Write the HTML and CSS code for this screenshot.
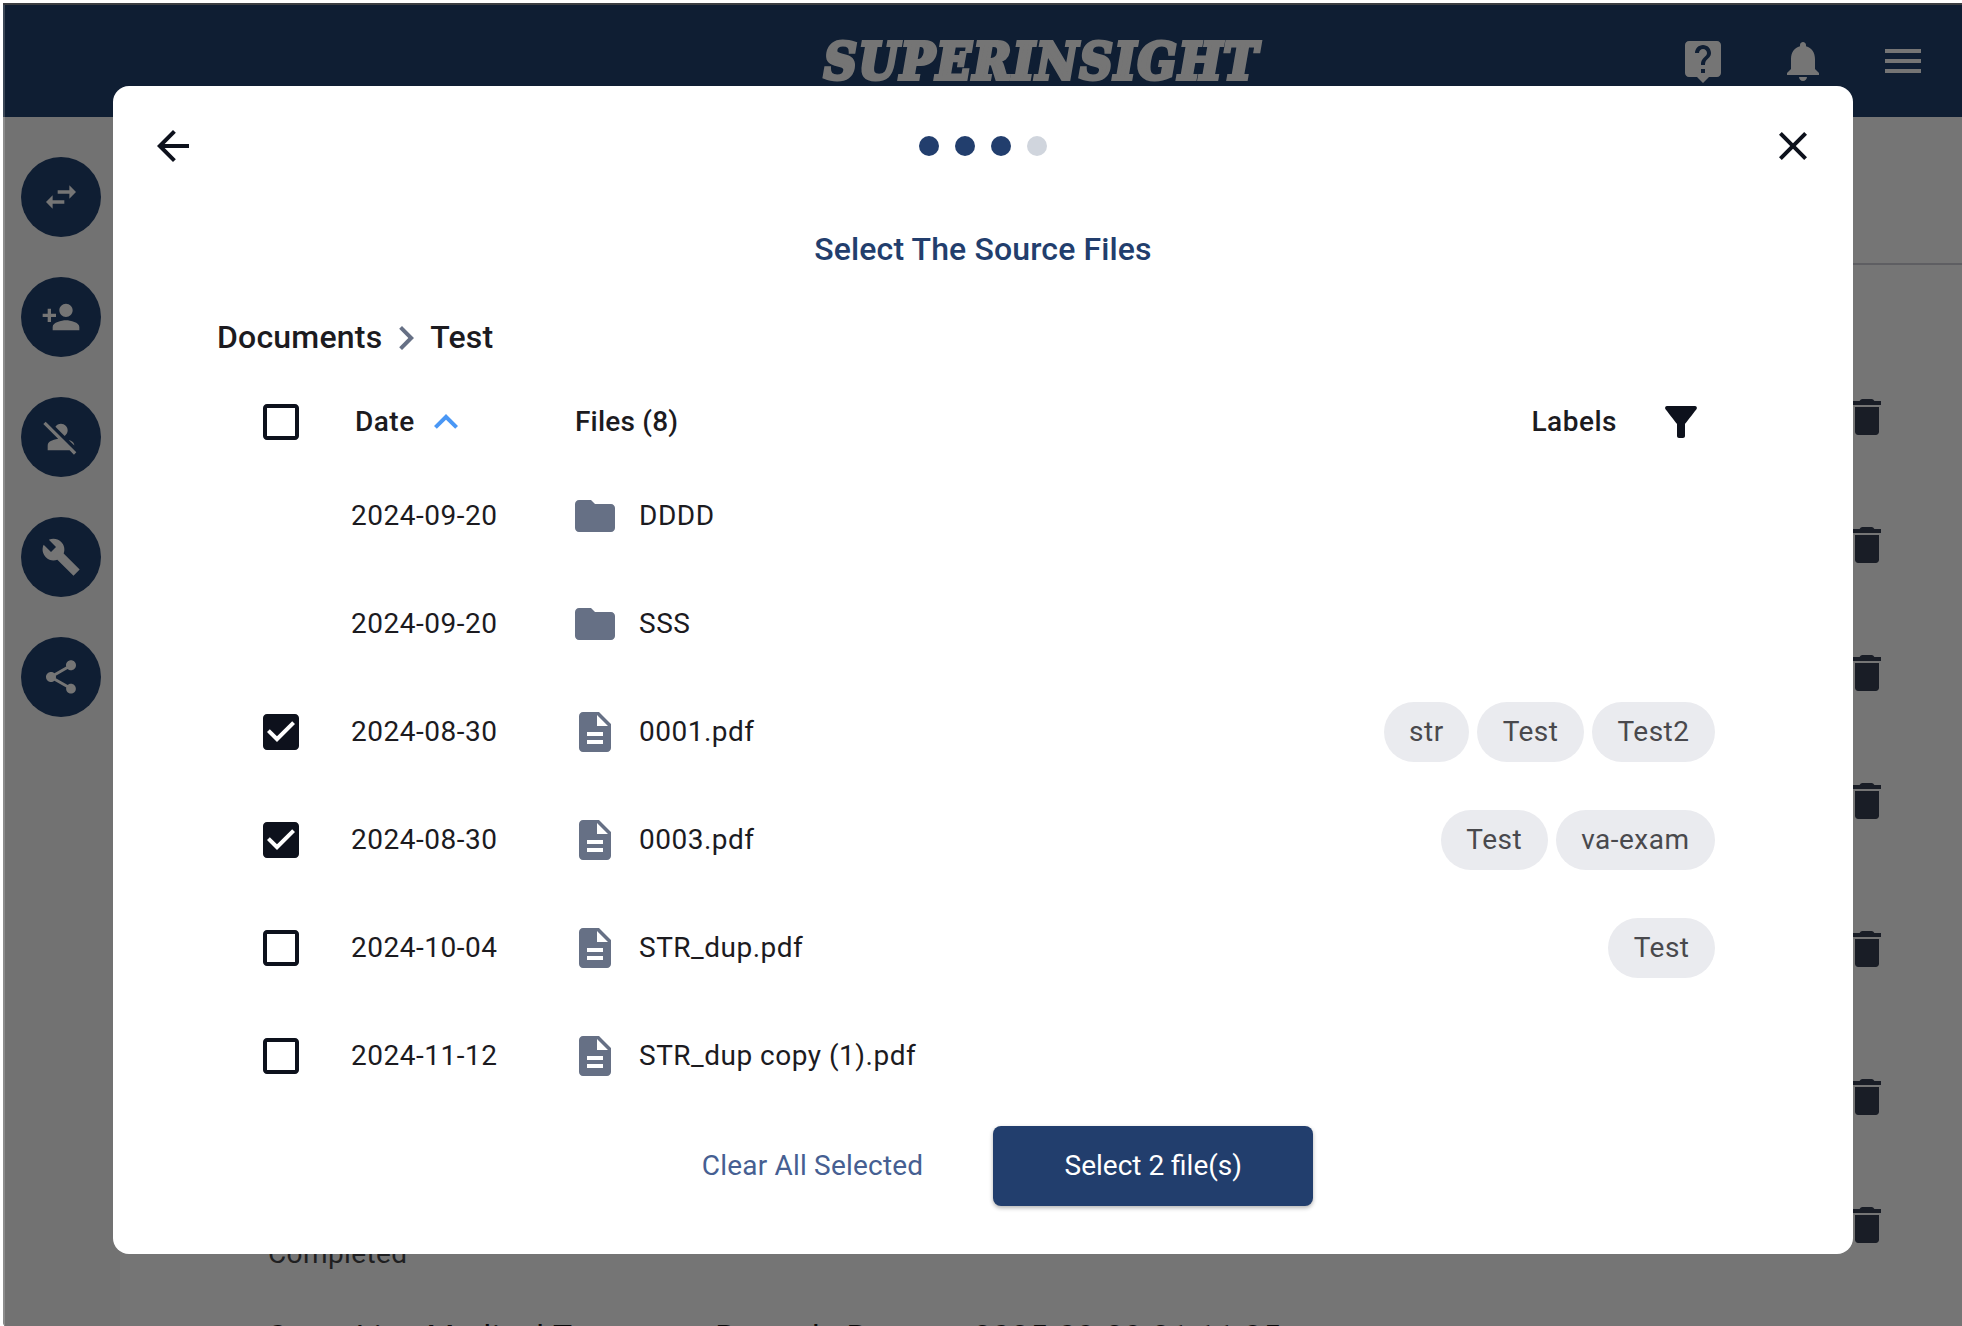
FILE: index.html
```html
<!DOCTYPE html>
<html lang="en">
<head>
<meta charset="utf-8">
<title>Superinsight</title>
<link rel="stylesheet" href="styles.css">
</head>
<body>
<svg class="sprite" aria-hidden="true">
  <symbol id="help" viewBox="0 0 24 24"><path d="M19 2H5c-1.11 0-2 .9-2 2v14c0 1.1.89 2 2 2h4l3 3 3-3h4c1.1 0 2-.9 2-2V4c0-1.1-.9-2-2-2zm-6 16h-2v-2h2v2zm2.07-7.75l-.9.92C13.45 11.9 13 12.5 13 14h-2v-.5c0-1.1.45-2.1 1.17-2.83l1.24-1.26c.37-.36.59-.86.59-1.41 0-1.1-.9-2-2-2s-2 .9-2 2H8c0-2.21 1.79-4 4-4s4 1.79 4 4c0 .88-.36 1.68-.93 2.25z"/></symbol>
  <symbol id="bell" viewBox="0 0 24 24"><path d="M12 22c1.1 0 2-.9 2-2h-4c0 1.1.89 2 2 2zm6-6v-5c0-3.07-1.64-5.64-4.5-6.32V4c0-.83-.67-1.5-1.5-1.5s-1.5.67-1.5 1.5v.68C7.63 5.36 6 7.92 6 11v5l-2 2v1h16v-1l-2-2z"/></symbol>
  <symbol id="menu" viewBox="0 0 24 24"><path d="M3 18h18v-2H3v2zm0-5h18v-2H3v2zm0-7v2h18V6H3z"/></symbol>
  <symbol id="swap" viewBox="0 0 24 24"><path d="M6.99 11L3 15l3.99 4v-3H14v-2H6.99v-3zM21 9l-3.99-4v3H10v2h7.01v3L21 9z"/></symbol>
  <symbol id="person-add" viewBox="0 0 24 24"><path d="M15 12c2.21 0 4-1.79 4-4s-1.79-4-4-4-4 1.79-4 4 1.79 4 4 4zm-9-2V7H4v3H1v2h3v3h2v-3h3v-2H6zm9 4c-2.67 0-8 1.34-8 4v2h16v-2c0-2.66-5.33-4-8-4z"/></symbol>
  <symbol id="person-off" viewBox="0 0 24 24"><path d="M8.65 5.82C9.36 4.72 10.6 4 12 4c2.21 0 4 1.79 4 4 0 1.4-.72 2.64-1.82 3.35L8.65 5.82zM20 17.17c-.02-1.1-.63-2.11-1.61-2.62-.54-.28-1.13-.54-1.77-.76L20 17.17zm1.19 4.02L2.81 2.81 1.39 4.22l8.89 8.89c-1.81.23-3.39.79-4.67 1.45-1 .51-1.61 1.54-1.61 2.66V20h13.17l2.61 2.61 1.41-1.42z"/></symbol>
  <symbol id="wrench" viewBox="0 0 24 24"><path d="M23.2 19.5l-9.6-9.6c.9-2.3.4-5-1.5-6.9-2-2-5-2.4-7.4-1.3L9 6 6 9 1.6 4.7C.4 7.1.9 10.1 2.9 12.1c1.9 1.9 4.6 2.4 6.9 1.5l9.7 9.7z"/></symbol>
  <symbol id="share" viewBox="0 0 24 24"><path d="M18 16.08c-.76 0-1.44.3-1.96.77L8.91 12.7c.05-.23.09-.46.09-.7s-.04-.47-.09-.7l7.05-4.11c.54.5 1.25.81 2.04.81 1.66 0 3-1.34 3-3s-1.34-3-3-3-3 1.34-3 3c0 .24.04.47.09.7L8.04 9.81C7.5 9.31 6.79 9 6 9c-1.66 0-3 1.34-3 3s1.34 3 3 3c.79 0 1.5-.31 2.04-.81l7.12 4.16c-.05.21-.08.43-.08.65 0 1.61 1.31 2.92 2.92 2.92s2.92-1.31 2.92-2.92-1.31-2.92-2.92-2.92z"/></symbol>
  <symbol id="trash" viewBox="0 0 24 24"><path d="M6 19.4c0 .9.7 1.6 1.6 1.6h8.8c.9 0 1.6-.7 1.6-1.6V7H6v12.4zM19 4h-3.3c-.4-.6-.8-1-1.4-1H9.7c-.6 0-1 .4-1.4 1H5v2h14V4z"/></symbol>
  <symbol id="back" viewBox="0 0 24 24"><path d="M20 11H7.83l5.59-5.59L12 4l-8 8 8 8 1.41-1.41L7.83 13H20v-2z"/></symbol>
  <symbol id="close" viewBox="0 0 24 24"><path d="M19 6.41L17.59 5 12 10.59 6.41 5 5 6.41 10.59 12 5 17.59 6.41 19 12 13.41 17.59 19 19 17.59 13.41 12z"/></symbol>
  <symbol id="chevron" viewBox="0 0 24 24"><path d="M10 6L8.59 7.41 13.17 12l-4.58 4.59L10 18l6-6z"/></symbol>
  <symbol id="caret-up" viewBox="0 0 24 24"><path d="M12 8l-6 6 1.41 1.41L12 10.83l4.59 4.58L18 14z"/></symbol>
  <symbol id="filter" viewBox="0 0 24 24"><path d="M4.25 5.61C6.27 8.2 10 13 10 13v6c0 .55.45 1 1 1h2c.55 0 1-.45 1-1v-6s3.72-4.8 5.74-7.39c.51-.66.04-1.61-.79-1.61H5.04c-.83 0-1.3.95-.79 1.61z"/></symbol>
  <symbol id="box" viewBox="0 0 24 24"><path d="M19 5v14H5V5h14m0-2H5c-1.1 0-2 .9-2 2v14c0 1.1.9 2 2 2h14c1.1 0 2-.9 2-2V5c0-1.1-.9-2-2-2z"/></symbol>
  <symbol id="box-on" viewBox="0 0 24 24"><path d="M19 3H5c-1.11 0-2 .9-2 2v14c0 1.1.89 2 2 2h14c1.11 0 2-.9 2-2V5c0-1.1-.89-2-2-2zm-9 14l-5-5 1.41-1.41L10 14.17l7.59-7.59L19 8l-9 9z"/></symbol>
  <symbol id="folder" viewBox="0 0 24 24"><path d="M10 4H4c-1.1 0-1.99.9-1.99 2L2 18c0 1.1.9 2 2 2h16c1.1 0 2-.9 2-2V8c0-1.1-.9-2-2-2h-8l-2-2z"/></symbol>
  <symbol id="file" viewBox="0 0 24 24"><path d="M14 2H6c-1.1 0-1.99.9-1.99 2L4 20c0 1.1.89 2 1.99 2H18c1.1 0 2-.9 2-2V8l-6-6zm2 16H8v-2h8v2zm0-4H8v-2h8v2zm-3-5V3.5L18.5 9H13z"/></symbol>
</svg>

<div class="app">
  <header class="topbar">
    <div class="logo">SUPERINSIGHT</div>
    <nav class="top-actions">
      <svg class="icon"><use href="#help"/></svg>
      <svg class="icon"><use href="#bell"/></svg>
      <svg class="icon"><use href="#menu"/></svg>
    </nav>
  </header>
  <div class="page">
    <aside class="sidebar">
      <span class="round"><svg><use href="#swap"/></svg></span>
      <span class="round"><svg><use href="#person-add"/></svg></span>
      <span class="round"><svg><use href="#person-off"/></svg></span>
      <span class="round"><svg><use href="#wrench"/></svg></span>
      <span class="round"><svg><use href="#share"/></svg></span>
    </aside>
    <main class="reports">
      <div class="reports-head"></div>
      <div class="report"><svg class="icon"><use href="#trash"/></svg></div>
      <div class="report"><svg class="icon"><use href="#trash"/></svg></div>
      <div class="report"><svg class="icon"><use href="#trash"/></svg></div>
      <div class="report"><svg class="icon"><use href="#trash"/></svg></div>
      <div class="report tall"><svg class="icon"><use href="#trash"/></svg></div>
      <div class="report"><svg class="icon"><use href="#trash"/></svg></div>
      <div class="report"><span class="status">Completed</span><svg class="icon"><use href="#trash"/></svg></div>
      <div class="report-title">Scott Lisa Medical Treatment Records Report - 2025-09-29 21:11:35</div>
    </main>
  </div>
</div>

<div class="overlay">
  <section class="modal">
    <div class="modal-bar">
      <svg class="icon"><use href="#back"/></svg>
      <div class="steps"><i class="on"></i><i class="on"></i><i class="on"></i><i></i></div>
      <svg class="icon"><use href="#close"/></svg>
    </div>
    <h1 class="title">Select The Source Files</h1>
    <div class="crumbs"><span>Documents</span><svg class="icon"><use href="#chevron"/></svg><span>Test</span></div>
    <div class="table">
      <div class="row head">
        <svg class="icon"><use href="#box"/></svg>
        <div class="date">Date<svg class="icon caret"><use href="#caret-up"/></svg></div>
        <div class="name">Files (8)</div>
        <div class="labels">Labels<svg class="icon"><use href="#filter"/></svg></div>
      </div>
      <div class="row"><span></span><div class="date">2024-09-20</div><div class="name"><svg class="icon"><use href="#folder"/></svg>DDDD</div></div>
      <div class="row"><span></span><div class="date">2024-09-20</div><div class="name"><svg class="icon"><use href="#folder"/></svg>SSS</div></div>
      <div class="row"><svg class="icon"><use href="#box-on"/></svg><div class="date">2024-08-30</div><div class="name"><svg class="icon"><use href="#file"/></svg>0001.pdf</div><div class="chips"><span>str</span><span>Test</span><span>Test2</span></div></div>
      <div class="row"><svg class="icon"><use href="#box-on"/></svg><div class="date">2024-08-30</div><div class="name"><svg class="icon"><use href="#file"/></svg>0003.pdf</div><div class="chips"><span>Test</span><span>va-exam</span></div></div>
      <div class="row"><svg class="icon"><use href="#box"/></svg><div class="date">2024-10-04</div><div class="name"><svg class="icon"><use href="#file"/></svg>STR_dup.pdf</div><div class="chips"><span>Test</span></div></div>
      <div class="row"><svg class="icon"><use href="#box"/></svg><div class="date">2024-11-12</div><div class="name"><svg class="icon"><use href="#file"/></svg>STR_dup copy (1).pdf</div></div>
    </div>
    <div class="actions"><span class="clear">Clear All Selected</span><span class="primary">Select 2 file(s)</span></div>
  </section>
</div>
</body>
</html>
```
FILE: styles.css
```css
* { box-sizing: border-box; }
body {
  margin: 0;
  height: 100vh;
  background: #fff;
  font-family: Roboto, "Liberation Sans", sans-serif;
  font-size: 28px;
  letter-spacing: 0.5px;
  color: #1c1b1f;
  overflow: hidden;
}
.sprite { display: none; }
svg { fill: currentColor; flex: none; }
.icon { display: block; width: 48px; height: 48px; }

/* Dimmed application behind the dialog */
.app {
  margin: 2.5px 0 0 3px;
  height: 1336px;
  border-top: 2px solid #3c3e42;
  border-bottom-left-radius: 20px;
  background: #757575;
  overflow: hidden;
}
.topbar {
  display: flex;
  align-items: center;
  height: 112px;
  padding: 0 35px 0 819px;
  background: #0f1e33;
  border-left: 2px solid #3b4757;
  color: #757575;
}
.logo {
  flex: 1;
  padding-top: 2px;
  font-family: "DejaVu Serif Condensed", "DejaVu Serif", serif;
  font-weight: bold;
  font-style: italic;
  font-size: 50.5px;
  line-height: 60px;
  letter-spacing: 2px;
  -webkit-text-stroke: 4px #757575;
}
.top-actions { display: flex; gap: 52px; }
.page { display: flex; height: 1222px; }
.sidebar {
  display: flex;
  flex-direction: column;
  align-items: center;
  gap: 40px;
  width: 117px;
  padding: 40px 3px 0 0;
  background: #727272;
  border-left: 2px solid #8c8c8c;
}
.round {
  display: grid;
  place-items: center;
  width: 80px;
  height: 80px;
  border-radius: 50%;
  background: #0f1e33;
  color: #757575;
}
.round svg { width: 40px; height: 40px; }
.reports { flex: 1; }
.reports-head { height: 148px; border-bottom: 2px solid #5e5e62; margin-bottom: 88px; }
.report {
  display: flex;
  align-items: center;
  height: 128px;
  padding: 0 71px 0 148px;
  color: #191d26;
}
.report.tall { height: 148px; margin: 10px 0; }
.report .icon { margin-left: auto; }
.status { padding-top: 58px; color: #1f1f21; letter-spacing: 0.4px; }
.report-title {
  margin-top: 27px;
  padding-left: 148px;
  font-size: 32px;
  line-height: 40px;
  letter-spacing: 0.8px;
  color: #0b0b0c;
  white-space: nowrap;
}

/* Dialog */
.overlay { position: fixed; inset: 85.5px 0 0 113px; }
.modal {
  width: 1740px;
  height: 1168px;
  padding: 36px;
  border-radius: 16px;
  background: #fff;
}
.modal-bar { display: flex; justify-content: space-between; align-items: center; color: #0d111c; }
.steps { display: flex; gap: 16px; }
.steps i { width: 20px; height: 20px; border-radius: 50%; background: #d0d5dd; }
.steps .on { background: #223e6d; }
.title {
  margin: 59px 0 0;
  text-align: center;
  font-size: 32px;
  font-weight: 500;
  line-height: 40px;
  letter-spacing: 0.13px;
  color: #223e6d;
}
.crumbs {
  display: flex;
  align-items: center;
  height: 48px;
  margin: 45px 0 0 68px;
  font-size: 32px;
  font-weight: 500;
  letter-spacing: 0.2px;
}
.crumbs span { padding-bottom: 2px; }
.crumbs .icon { color: #667085; }
.table { margin: 20px 102px 0 108px; }
.row {
  display: grid;
  grid-template-columns: 48px 174px 1fr auto;
  column-gap: 46px;
  align-items: center;
  height: 108px;
}
.row > .icon { color: #0d111c; }
.row.head { height: 80px; font-weight: 500; }
.row .name { display: flex; align-items: center; gap: 20px; }
.row .name .icon { color: #667085; }
.row.head .name { padding-left: 4px; letter-spacing: 0.2px; }
.row.head .date { display: flex; align-items: center; padding-left: 4px; }
.row.head .caret { margin-left: 7px; color: #4a97f5; }
.labels { display: flex; align-items: center; gap: 40px; padding-right: 10px; }
.labels .icon { color: #0d111c; }
.chips { display: flex; gap: 8px; }
.chips span {
  height: 60px;
  padding: 0 25.5px;
  border-radius: 30px;
  background: #eaebef;
  color: #49494d;
  line-height: 60px;
}
.actions {
  display: flex;
  align-items: center;
  justify-content: center;
  gap: 70px;
  margin-top: 16px;
  padding-left: 49px;
}
.clear { color: #465f92; letter-spacing: 0.2px; }
.primary {
  width: 320px;
  height: 80px;
  border-radius: 8px;
  background: #223e6d;
  box-shadow: 0 2px 4px rgba(0, 0, 0, 0.3);
  color: #fff;
  letter-spacing: 0;
  text-align: center;
  line-height: 80px;
}
```
